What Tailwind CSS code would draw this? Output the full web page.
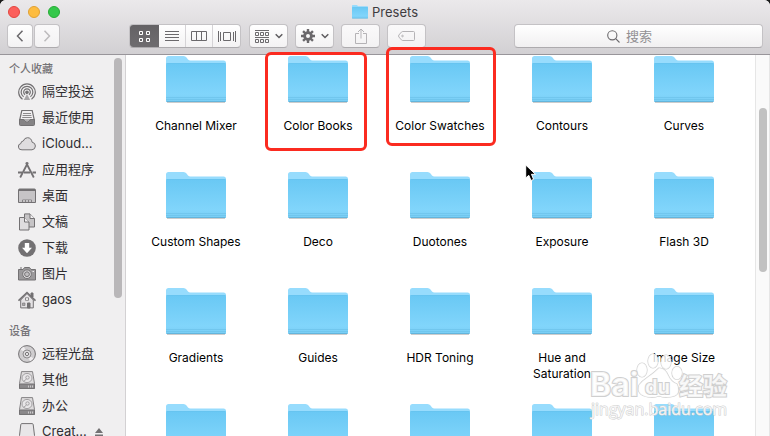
<!DOCTYPE html>
<html lang="zh-CN">
<head>
<meta charset="utf-8">
<meta name="viewport" content="width=device-width, initial-scale=1">
<title>Presets</title>
<script src="https://cdn.jsdelivr.net/npm/@tailwindcss/browser@4"></script>
</head>
<body class="h-screen overflow-hidden bg-[#1b1b1b] font-['Inter','Noto_Sans_CJK_SC',sans-serif] text-[#2f2d30]">

<!-- Shared drawings -->
<svg class="absolute size-0" aria-hidden="true">
  <defs>
    <linearGradient id="front" x1="0" y1="0" x2="0" y2="1">
      <stop offset="0" stop-color="#69c8f4"/><stop offset=".8" stop-color="#81d5fb"/><stop offset="1" stop-color="#78cdf4"/>
    </linearGradient>
    <symbol id="folder" viewBox="0 0 60 48">
      <path d="M1 46.500H59" stroke="#000" stroke-opacity=".2" stroke-width="1"/>
      <path d="M0 44V2.500Q0 0 2.500 0H17.500Q19.500 0 20.500 1.500L22 3.500Q22.800 4.500 24.500 4.500H57.500Q60 4.500 60 7V44Z" fill="#97dcfd"/>
      <path d="M0 8.500Q0 7 1.500 7H58.500Q60 7 60 8.500V44.500Q60 46 58.500 46H1.500Q0 46 0 44.500Z" fill="url(#front)"/>
      <path d="M.5 7.500H59.500" stroke="#66c3ee" stroke-width=".7"/>
      <path d="M0 41.500H60M0 43.500H60" stroke="#69bfe8" stroke-width=".6"/>
      <path d="M.5 45.500H59.500" stroke="#63b5dc" stroke-width="1"/>
    </symbol>
    <symbol id="disk" viewBox="0 0 18 18">
      <path d="M3.500.6H14.500L16.500 12.500V17.400H1.500V12.500Z" fill="#dedcdd" stroke="#858385"/>
      <path d="M1.500 13H16.500V17.400H1.500Z" fill="#8b898b" stroke="#737173"/>
      <path d="M10.500 14.500V16.500M12.500 14.500V16.500M14.500 14.500V16.500" stroke="#dedcdd" stroke-width=".8"/>
      <ellipse cx="9" cy="7" rx="5" ry="4.600" fill="#e8e6e8" stroke="#a3a1a3"/>
      <circle cx="9.500" cy="6.500" r="1.700" fill="none" stroke="#a3a1a3"/>
      <path d="M8.500 8L5.500 10.500" stroke="#a3a1a3"/>
    </symbol>
  </defs>
</svg>

<div class="flex h-full flex-col overflow-hidden rounded-t-md bg-white">

  <header class="shrink-0 border-b border-[#98959a] bg-linear-to-b from-[#ebe9eb] to-[#d2d0d3]">
    <div class="grid h-6 grid-cols-[1fr_auto_1fr] items-center px-2">
      <div class="flex gap-2">
        <button aria-label="关闭" class="size-3 rounded-full border border-[#e2463f] bg-[#fc605c]"></button>
        <button aria-label="最小化" class="size-3 rounded-full border border-[#e0a033] bg-[#fdbc40]"></button>
        <button aria-label="缩放" class="size-3 rounded-full border border-[#26ab35] bg-[#34c84a]"></button>
      </div>
      <h1 class="flex items-center gap-1 text-[13px] leading-4 text-[#3e3c40]">
        <svg class="h-[14px] w-4" viewBox="0 0 60 48" preserveAspectRatio="none" aria-hidden="true"><use href="#folder"/></svg>Presets
      </h1>
    </div>

    <div class="flex h-[30px] items-start px-[7px]">
      <div class="flex gap-px">
        <button aria-label="后退" class="flex h-6 w-[26px] items-center justify-center rounded border border-[#c4c2c5] border-b-[#adabae] bg-linear-to-b from-white to-[#f3f2f3]">
          <svg class="h-3 w-2" viewBox="0 0 8 12" fill="none" stroke="#6b696c" stroke-width="1.500"><path d="M6.500.7L1.500 6L6.500 11.300"/></svg>
        </button>
        <button aria-label="前进" class="flex h-6 w-[26px] items-center justify-center rounded border border-[#c4c2c5] border-b-[#adabae] bg-linear-to-b from-[#faf9fa] to-[#f3f2f3]">
          <svg class="h-3 w-2" viewBox="0 0 8 12" fill="none" stroke="#bdbbbd" stroke-width="1.500"><path d="M1.500.7L6.500 6L1.500 11.300"/></svg>
        </button>
      </div>

      <div class="ml-[69px] flex h-6 overflow-hidden rounded border border-[#c4c2c5] border-b-[#adabae] bg-linear-to-b from-white to-[#f3f2f3]">
        <button aria-label="图标显示" class="flex w-[29px] items-center justify-center bg-linear-to-b from-[#646265] to-[#6e6c6f]">
          <svg class="size-[11px]" viewBox="0 0 11 11" fill="none" stroke="#fff"><path d="M.5.500H3.500V3.500H.5ZM7.500.500H10.500V3.500H7.500ZM.5 7.500H3.500V10.500H.5ZM7.500 7.500H10.500V10.500H7.500Z"/></svg>
        </button>
        <button aria-label="列表显示" class="flex w-[27px] items-center justify-center border-r border-[#d5d3d6]">
          <svg class="h-[11px] w-[14px]" viewBox="0 0 14 11" stroke="#6b696c"><path d="M0 .5H14M0 3.500H14M0 6.500H14M0 9.500H14"/></svg>
        </button>
        <button aria-label="分栏显示" class="flex w-[27px] items-center justify-center border-r border-[#d5d3d6]">
          <svg class="h-[11px] w-4" viewBox="0 0 16 11" fill="none" stroke="#6b696c"><path d="M.5.500H15.500V9.500H.5ZM5.500.500V9.500M10.500.500V9.500"/></svg>
        </button>
        <button aria-label="封面流显示" class="flex w-[27px] items-center justify-center">
          <svg class="h-[11px] w-[18px]" viewBox="0 0 18 11" fill="none" stroke="#6b696c"><path d="M.5 0V11M2.500 1V10M15.500 1V10M17.500 0V11M5.500 1.500H12.500V9.500H5.500Z"/></svg>
        </button>
      </div>

      <div class="ml-2 flex gap-[7px]">
        <button aria-label="项目排列方式" class="flex h-6 w-[39px] items-center justify-center gap-[6px] rounded border border-[#c4c2c5] border-b-[#adabae] bg-linear-to-b from-white to-[#f3f2f3]">
          <svg class="h-[13px] w-[14px]" viewBox="0 0 14 13" fill="none" stroke="#6b696c"><path d="M0 .5H14M0 7.500H14M.5 2.500H3.500V5.500H.5ZM5.500 2.500H8.500V5.500H5.500ZM10.500 2.500H13.500V5.500H10.500ZM.5 9.500H3.500V12.500H.5ZM5.500 9.500H8.500V12.500H5.500ZM10.500 9.500H13.500V12.500H10.500Z"/></svg>
          <svg class="h-[6px] w-2" viewBox="0 0 8 6" fill="none" stroke="#5e5c5f" stroke-width="1.500"><path d="M.7 1.200L4 4.500L7.300 1.200"/></svg>
        </button>
        <button aria-label="操作" class="flex h-6 w-[39px] items-center justify-center gap-[6px] rounded border border-[#c4c2c5] border-b-[#adabae] bg-linear-to-b from-white to-[#f3f2f3]">
          <svg class="size-[14px]" viewBox="0 0 14 14" fill="none" stroke="#6b696c"><circle cx="7" cy="7" r="3.400" stroke-width="2.800"/><path d="M7 0V3M7 11V14M0 7H3M11 7H14M2.050 2.050L4 4M10 10L11.950 11.950M11.950 2.050L10 4M4 10L2.050 11.950" stroke-width="2.400"/></svg>
          <svg class="h-[6px] w-2" viewBox="0 0 8 6" fill="none" stroke="#5e5c5f" stroke-width="1.500"><path d="M.7 1.200L4 4.500L7.300 1.200"/></svg>
        </button>
        <button aria-label="共享" class="flex h-6 w-[39px] items-center justify-center rounded border border-[#c4c2c5] border-b-[#adabae] bg-linear-to-b from-[#faf9fa] to-[#f3f2f3]">
          <svg class="h-4 w-3" viewBox="0 0 12 16" fill="none" stroke="#b5b3b6"><path d="M4 5.500H.5V15.500H11.500V5.500H8M6 10.500V1M3 4L6 1L9 4"/></svg>
        </button>
        <button aria-label="编辑标记" class="flex h-6 w-[39px] items-center justify-center rounded border border-[#c4c2c5] border-b-[#adabae] bg-linear-to-b from-[#faf9fa] to-[#f3f2f3]">
          <svg class="h-[10px] w-[17px]" viewBox="0 0 17 10" fill="none" stroke="#b5b3b6"><path d="M4.800.500H15.500Q16.500.500 16.500 1.500V8.500Q16.500 9.500 15.500 9.500H4.800Q4 9.500 3.400 8.900L.9 6Q.2 5 .9 4L3.400 1.100Q4 .5 4.800.500Z"/><circle cx="4.500" cy="5" r=".8"/></svg>
        </button>
      </div>

      <label class="ml-auto flex h-6 w-[249px] items-center justify-center gap-[6px] rounded border border-[#c4c2c5] border-b-[#adabae] bg-linear-to-b from-white to-[#f1f0f1]">
        <svg class="size-[13px]" viewBox="0 0 13 13" fill="none" stroke="#6b696c" stroke-width="1.100" aria-hidden="true"><circle cx="5.300" cy="5.300" r="4.600"/><path d="M8.700 8.700L12.500 12.500"/></svg>
        <input type="text" aria-label="搜索" placeholder="搜索" class="w-11 bg-transparent text-[13px] leading-5 outline-none placeholder:text-[#929093]">
      </label>
    </div>
  </header>

  <div class="flex min-h-0 flex-1">

    <nav class="relative w-[126px] shrink-0 overflow-hidden border-r border-[#d3d1d3] bg-[#f0eff0] pt-1 text-[13px]">
      <h2 class="pl-[9px] text-[11px] leading-5 font-medium text-[#747276]">个人收藏</h2>
      <ul class="pl-[18px]">
        <li><a href="#" class="flex h-[26px] items-center gap-[6px]">
          <svg class="size-[18px]" viewBox="0 0 18 18" fill="none" stroke="#737173" stroke-width="1.200"><path d="M4.500 16.200A8.300 8.300 0 1 1 13.500 16.200M5.600 13.800A5.800 5.800 0 1 1 12.400 13.800M7 11.700A3.300 3.300 0 1 1 11 11.700"/><circle cx="9" cy="9.300" r="1.200" fill="#737173"/><path d="M9 11L5.800 17H12.200Z" fill="#a8a6a8" stroke="none"/></svg>隔空投送</a></li>
        <li><a href="#" class="flex h-[26px] items-center gap-[6px]">
          <svg class="size-[18px]" viewBox="0 0 18 18"><path d="M3.800 1.500H14.200L16.300 11H1.700Z" fill="#f1eff1" stroke="#737173" stroke-width="1.200"/><path d="M5 4.500H13M4.600 6.500H13.400M4.200 8.500H13.800" stroke="#737173" stroke-width=".8"/><path d="M1.500 10.500H5.800Q6.200 13 9 13T12.200 10.500H16.500V15.500Q16.500 16.500 15.500 16.500H2.500Q1.500 16.500 1.500 15.500Z" fill="#858385" stroke="#737173"/></svg>最近使用</a></li>
        <li><a href="#" class="flex h-[26px] items-center gap-[6px]">
          <svg class="size-[18px]" viewBox="0 0 18 18"><path d="M4 14.800A3.200 3.200 0 0 1 2.900 8.500Q2.800 6.200 5.300 6Q6.500 2.700 9.500 2.700Q13.300 2.700 14.100 7.200Q17.400 7.800 17.400 11Q17.300 14.500 14 14.800Z" fill="#dedcde" stroke="#737173"/></svg>iCloud...</a></li>
        <li><a href="#" class="flex h-[26px] items-center gap-[6px]">
          <svg class="size-[18px]" viewBox="0 0 18 18" fill="none" stroke="#737173"><path d="M8 1.500L15.800 16.500M10 1.500L2.200 16.500" stroke-width="1.800"/><path d="M0 11.500H4M6 11.500H12M14.500 11.500H18" stroke-width="2"/></svg>应用程序</a></li>
        <li><a href="#" class="flex h-[26px] items-center gap-[6px]">
          <svg class="size-[18px]" viewBox="0 0 18 18"><path d="M.5 3Q.5 2 1.500 2H16.500Q17.500 2 17.500 3V15.500H.5Z" fill="#c6c4c6" stroke="#737173"/><path d="M1 3H17" stroke="#737173" stroke-width="2"/><path d="M4.500 13H13.500V15H4.500Z" fill="#f7f5f7" stroke="#737173" stroke-width=".8"/><path d="M7.500 13V15M10.500 13V15" stroke="#737173" stroke-width=".8"/></svg>桌面</a></li>
        <li><a href="#" class="flex h-[26px] items-center gap-[6px]">
          <svg class="size-[18px]" viewBox="0 0 18 18" stroke="#737173"><path d="M6.500.900H12L16.500 5.500V14H6.500Z" fill="#c6c4c6"/><path d="M12 1V5.500H16.500" fill="#f1eff1"/><path d="M1.500 4.500H6.500L11 9V17H1.500Z" fill="#dedcde"/><path d="M6.500 4.500V9H11" fill="#f1eff1"/></svg>文稿</a></li>
        <li><a href="#" class="flex h-[26px] items-center gap-[6px]">
          <svg class="size-[18px]" viewBox="0 0 18 18"><circle cx="9" cy="9" r="8.800" fill="#737173"/><path d="M6.800 4H11.200V8.800H14L9 14.200L4 8.800H6.800Z" fill="#fff"/></svg>下载</a></li>
        <li><a href="#" class="flex h-[26px] items-center gap-[6px]">
          <svg class="size-[18px]" viewBox="0 0 18 18" stroke="#737173"><path d="M.5 4.500H5L6.500 2.500H11.500L13 4.500H17.500V15H.5Z" fill="#9b999b"/><path d="M2 3H4" stroke-width="1.200"/><circle cx="9" cy="9.200" r="4.300" fill="#dedcde"/><circle cx="9" cy="9.200" r="2.400" fill="#c0bec0"/><path d="M14.500 6.500H16" stroke="#f1eff1"/></svg>图片</a></li>
        <li><a href="#" class="flex h-[26px] items-center gap-[6px]">
          <svg class="size-[18px]" viewBox="0 0 18 18" stroke="#737173"><path d="M13 2H15V6H13Z" fill="#737173"/><path d="M2.700 9V16.900H15.300V9L9 2.500Z" fill="#e4e2e4"/><path d="M.5 9.700L9 1.500L17.500 9.700" fill="none" stroke-width="1.600"/><path d="M7.500 6.800H10.500V9.300H7.500Z" fill="#fff" stroke-width=".8"/><path d="M9.500 12H12V17H9.500Z" fill="#737173"/><path d="M4.500 12H7V14.500H4.500Z" fill="#aaa8aa" stroke-width=".6"/></svg>gaos</a></li>
      </ul>
      <h2 class="mt-2 pl-[9px] text-[11px] leading-5 font-medium text-[#747276]">设备</h2>
      <ul class="pl-[18px]">
        <li><a href="#" class="flex h-[26px] items-center gap-[6px]">
          <svg class="size-[18px]" viewBox="0 0 18 18" stroke="#737173"><circle cx="9" cy="9" r="8.400" fill="#cfcdcf"/><path d="M9 9L2.500 4.500A8 8 0 0 1 6 1.800ZM9 9L15.500 13.500A8 8 0 0 1 12 16.200Z" fill="#efedef" stroke="none"/><circle cx="9" cy="9" r="4" fill="#dedcde" stroke="#8f8d8f"/><circle cx="9" cy="9" r="1.600" fill="#f4f2f4"/></svg>远程光盘</a></li>
        <li><a href="#" class="flex h-[26px] items-center gap-[6px]"><svg class="size-[18px]" aria-hidden="true"><use href="#disk"/></svg>其他</a></li>
        <li><a href="#" class="flex h-[26px] items-center gap-[6px]"><svg class="size-[18px]" aria-hidden="true"><use href="#disk"/></svg>办公</a></li>
        <li class="flex h-[26px] items-center gap-2"><a href="#" class="flex items-center gap-[6px]">
          <svg class="size-[18px]" viewBox="0 0 18 18"><path d="M4 .6H14Q15 .6 15.200 1.500L16.500 12.500V17.400H1.500V12.500L2.800 1.500Q3 .6 4 .6Z" fill="#e8e6e8" stroke="#737173"/></svg>Creat...</a>
          <button aria-label="推出"><svg class="h-[9px] w-2" viewBox="0 0 8 9" fill="#737173"><path d="M4 0L8 5H0ZM0 6.500H8V8.500H0Z"/></svg></button></li>
      </ul>
      <div class="absolute top-[3px] right-[3px] h-[240px] w-2 rounded-full bg-[#b9b7b9]"></div>
    </nav>

    <main class="relative min-w-0 flex-1 overflow-hidden bg-white pt-px pr-[10px] pl-[9px] text-black">
      <ul class="grid auto-rows-[116px] grid-cols-5 text-center text-[12px] leading-4">
        <li class="flex flex-col items-center gap-[14px]"><svg class="h-12 w-[60px] shrink-0" aria-hidden="true"><use href="#folder"/></svg>Channel Mixer</li>
        <li class="flex flex-col items-center gap-[14px]"><svg class="h-12 w-[60px] shrink-0" aria-hidden="true"><use href="#folder"/></svg>Color Books</li>
        <li class="flex flex-col items-center gap-[14px]"><svg class="h-12 w-[60px] shrink-0" aria-hidden="true"><use href="#folder"/></svg>Color Swatches</li>
        <li class="flex flex-col items-center gap-[14px]"><svg class="h-12 w-[60px] shrink-0" aria-hidden="true"><use href="#folder"/></svg>Contours</li>
        <li class="flex flex-col items-center gap-[14px]"><svg class="h-12 w-[60px] shrink-0" aria-hidden="true"><use href="#folder"/></svg>Curves</li>
        <li class="flex flex-col items-center gap-[14px]"><svg class="h-12 w-[60px] shrink-0" aria-hidden="true"><use href="#folder"/></svg>Custom Shapes</li>
        <li class="flex flex-col items-center gap-[14px]"><svg class="h-12 w-[60px] shrink-0" aria-hidden="true"><use href="#folder"/></svg>Deco</li>
        <li class="flex flex-col items-center gap-[14px]"><svg class="h-12 w-[60px] shrink-0" aria-hidden="true"><use href="#folder"/></svg>Duotones</li>
        <li class="flex flex-col items-center gap-[14px]"><svg class="h-12 w-[60px] shrink-0" aria-hidden="true"><use href="#folder"/></svg>Exposure</li>
        <li class="flex flex-col items-center gap-[14px]"><svg class="h-12 w-[60px] shrink-0" aria-hidden="true"><use href="#folder"/></svg>Flash 3D</li>
        <li class="flex flex-col items-center gap-[14px]"><svg class="h-12 w-[60px] shrink-0" aria-hidden="true"><use href="#folder"/></svg>Gradients</li>
        <li class="flex flex-col items-center gap-[14px]"><svg class="h-12 w-[60px] shrink-0" aria-hidden="true"><use href="#folder"/></svg>Guides</li>
        <li class="flex flex-col items-center gap-[14px]"><svg class="h-12 w-[60px] shrink-0" aria-hidden="true"><use href="#folder"/></svg>HDR Toning</li>
        <li class="flex flex-col items-center gap-[14px]"><svg class="h-12 w-[60px] shrink-0" aria-hidden="true"><use href="#folder"/></svg><span>Hue and<br>Saturation</span></li>
        <li class="flex flex-col items-center gap-[14px]"><svg class="h-12 w-[60px] shrink-0" aria-hidden="true"><use href="#folder"/></svg>Image Size</li>
        <li class="flex flex-col items-center"><svg class="h-12 w-[60px] shrink-0" aria-hidden="true"><use href="#folder"/></svg></li>
        <li class="flex flex-col items-center"><svg class="h-12 w-[60px] shrink-0" aria-hidden="true"><use href="#folder"/></svg></li>
        <li class="flex flex-col items-center"><svg class="h-12 w-[60px] shrink-0" aria-hidden="true"><use href="#folder"/></svg></li>
        <li class="flex flex-col items-center"><svg class="h-12 w-[60px] shrink-0" aria-hidden="true"><use href="#folder"/></svg></li>
        <li class="flex flex-col items-center"><svg class="h-12 w-[60px] shrink-0" aria-hidden="true"><use href="#folder"/></svg></li>
      </ul>
    </main>

    <div class="w-[15px] shrink-0 border-x border-[#e6e6e6] bg-[#fafafa] pt-[53px]">
      <div class="mx-auto h-[164px] w-2 rounded-full bg-[#c1c1c1]"></div>
    </div>
  </div>
</div>

<!-- Highlight frames, pointer and watermark lie over the window -->
<div class="pointer-events-none absolute top-[52px] left-[265px] h-[99px] w-[102px] rounded-md border-3 border-[#fb2b20]"></div>
<div class="pointer-events-none absolute top-[47px] left-[386px] h-[99px] w-[110px] rounded-md border-3 border-[#fb2b20]"></div>
<svg class="pointer-events-none absolute top-[164px] left-[525px] h-[18px] w-3" viewBox="0 0 12 18" aria-hidden="true"><path d="M.7 1V14L3.800 11.300L6 16.500L8.600 15.400L6.500 10.300H10.500Z" fill="#000" stroke="#fff"/></svg>

<div class="pointer-events-none absolute top-[354px] left-[590px] h-[66px] w-[140px] font-bold">
  <svg class="h-full w-full overflow-visible" viewBox="0 0 140 66" role="img" aria-label="Baidu 经验 jingyan.baidu.com">
    <g fill="#fff" fill-opacity=".8" stroke="#cfcfcf" stroke-width="2" paint-order="stroke">
      <g stroke-width="1.200">
        <ellipse cx="52" cy="16" rx="5" ry="7"/><ellipse cx="63" cy="7" rx="5" ry="7"/><ellipse cx="76" cy="8" rx="5" ry="7"/><ellipse cx="87" cy="19" rx="5" ry="6.500"/>
        <path d="M69 14Q75 14 78 21T87 30Q92 42 80 43Q74 44 69 42Q64 44 58 43Q46 41 49 31Q52 27 58 23T69 14Z"/>
      </g>
      <text x="0" y="42" font-size="32">Bai</text>
      <text x="55" y="40" font-size="20">du</text>
      <text x="89" y="41" font-size="24">经验</text>
      <text x="1" y="61" font-size="16" class="font-['Open_Sans',sans-serif] font-medium" stroke-width="1">jingyan.baidu.com</text>
    </g>
  </svg>
</div>
</body>
</html>
